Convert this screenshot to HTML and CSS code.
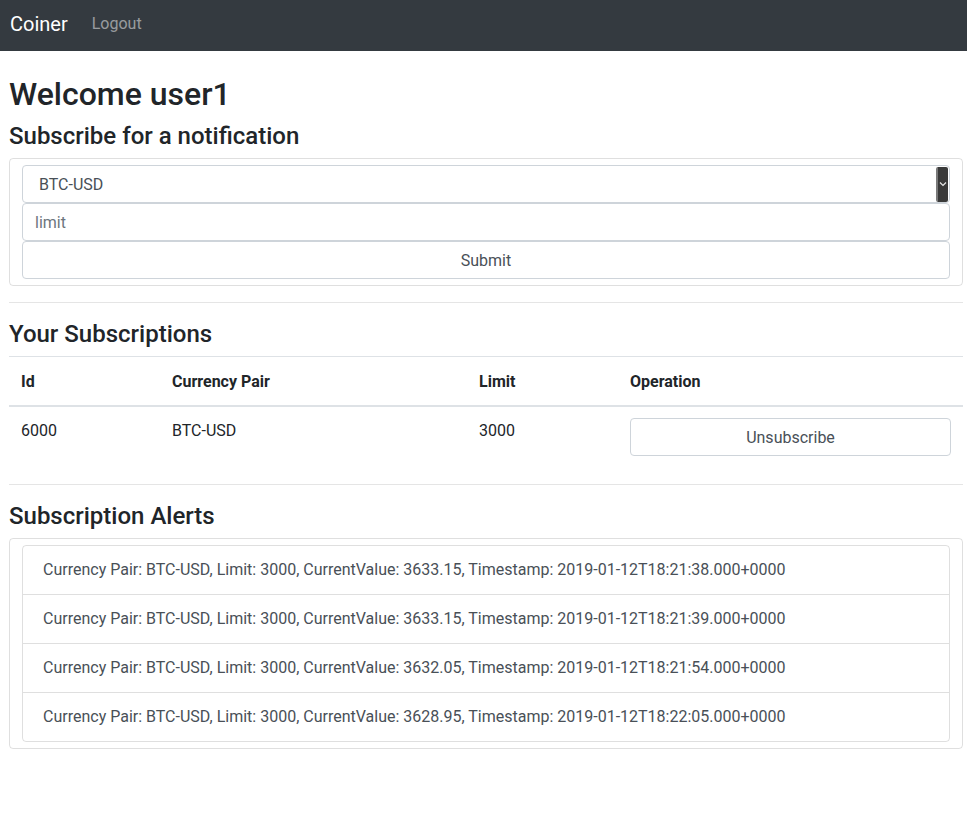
FILE: index.html
```html
<!DOCTYPE html>
<html>
<head>
<meta charset="utf-8">
<title>Coiner</title>
<link rel="stylesheet" href="styles.css">
</head>
<body>
<nav class="navbar">
  <span class="brand">Coiner</span>
  <a class="nav-link">Logout</a>
</nav>
<main class="main">
  <h2 class="title">Welcome user1</h2>
  <h4 class="subtitle">Subscribe for a notification</h4>
  <form class="card form-card">
    <div class="field select-field">
      <span class="select-value">BTC-USD</span>
      <span class="select-handle"><svg width="8" height="6" viewBox="0 0 8 6"><path d="M1 1.5 L4 4.5 L7 1.5" fill="none" stroke="#e8e8e8" stroke-width="1.2"/></svg></span>
    </div>
    <div class="field input-field"><span class="placeholder">limit</span></div>
    <div class="field button-field">Submit</div>
  </form>
  <hr class="rule">
  <h4 class="subtitle">Your Subscriptions</h4>
  <table class="table">
    <thead>
      <tr>
        <th class="col-id">Id</th>
        <th class="col-pair">Currency Pair</th>
        <th class="col-limit">Limit</th>
        <th class="col-op">Operation</th>
      </tr>
    </thead>
    <tbody>
      <tr>
        <td>6000</td>
        <td>BTC-USD</td>
        <td>3000</td>
        <td><div class="field button-field row-button">Unsubscribe</div></td>
      </tr>
    </tbody>
  </table>
  <hr class="rule">
  <h4 class="subtitle">Subscription Alerts</h4>
  <div class="card list-card">
    <ul class="list-group">
      <li class="list-item">Currency Pair: BTC-USD, Limit: 3000, CurrentValue: 3633.15, Timestamp: 2019-01-12T18:21:38.000+0000</li>
      <li class="list-item">Currency Pair: BTC-USD, Limit: 3000, CurrentValue: 3633.15, Timestamp: 2019-01-12T18:21:39.000+0000</li>
      <li class="list-item">Currency Pair: BTC-USD, Limit: 3000, CurrentValue: 3632.05, Timestamp: 2019-01-12T18:21:54.000+0000</li>
      <li class="list-item">Currency Pair: BTC-USD, Limit: 3000, CurrentValue: 3628.95, Timestamp: 2019-01-12T18:22:05.000+0000</li>
    </ul>
  </div>
</main>
</body>
</html>
```

FILE: styles.css
```css
* { box-sizing: border-box; }
body {
  margin: 0;
  font-family: Roboto, "Noto Sans", sans-serif;
  font-size: 16px;
  line-height: 1.5;
  color: #212529;
  background: #fff;
}
.navbar {
  height: 51px;
  background: #343a40;
  display: flex;
  align-items: center;
  padding: 0 10px 4px;
  gap: 24px;
}
.brand {
  color: #fff;
  font-size: 20px;
  line-height: 30px;
}
.nav-link {
  color: rgba(255,255,255,.5);
  font-size: 16px;
}
.main {
  padding: 24px 4px 0 9px;
}
.title {
  font-size: 32px;
  font-weight: 500;
  line-height: 1.2;
  margin: 0 0 8px;
}
.subtitle {
  font-size: 24px;
  font-weight: 500;
  line-height: 1.2;
  margin: 0 0 7px;
  padding-top: 1px;
}
.card {
  border: 1px solid rgba(0,0,0,.125);
  border-radius: 4px;
}
.form-card {
  margin: 0;
  padding: 6px 12px;
  display: flex;
  flex-direction: column;
}
.field {
  height: 38px;
  border: 1px solid #ced4da;
  border-radius: 4px;
  display: flex;
  align-items: center;
  padding-top: 2px;
  color: #495057;
  background: #fff;
}
.select-field {
  padding-left: 16px;
  padding-right: 1px;
  padding-top: 0;
  justify-content: space-between;
}
.select-value { padding-top: 2px; }
.select-handle {
  width: 12px;
  height: 35px;
  background: #3a3a3a;
  border-left: 2px solid #7a7a7a;
  border-radius: 2px;
  display: flex;
  align-items: center;
  justify-content: center;
}
.input-field { padding-left: 12px; }
.placeholder { color: #6c757d; }
.button-field {
  justify-content: center;
}
.row-button { margin-top: -1px; }
.rule {
  border: 0;
  border-top: 1px solid rgba(0,0,0,.1);
  margin: 16px 0;
}
.table {
  width: 100%;
  border-collapse: collapse;
  margin-bottom: 16px;
}
.table th, .table td {
  text-align: left;
  vertical-align: top;
  padding: 12px;
  border-top: 1px solid #dee2e6;
}
.table th { font-weight: 700; padding: 13px 12px 11px; }
.table thead th { border-bottom: 2px solid #dee2e6; }
.col-id { width: 151px; }
.col-pair { width: 307px; }
.col-limit { width: 151px; }
.list-card {
  padding: 6px 12px;
}
.list-group {
  list-style: none;
  margin: 0;
  padding: 0;
  border: 1px solid rgba(0,0,0,.125);
  border-radius: 4px;
}
.list-item {
  padding: 12px 20px;
  color: #495057;
  border-top: 1px solid rgba(0,0,0,.125);
}
.list-item:first-child { border-top: 0; }
```
